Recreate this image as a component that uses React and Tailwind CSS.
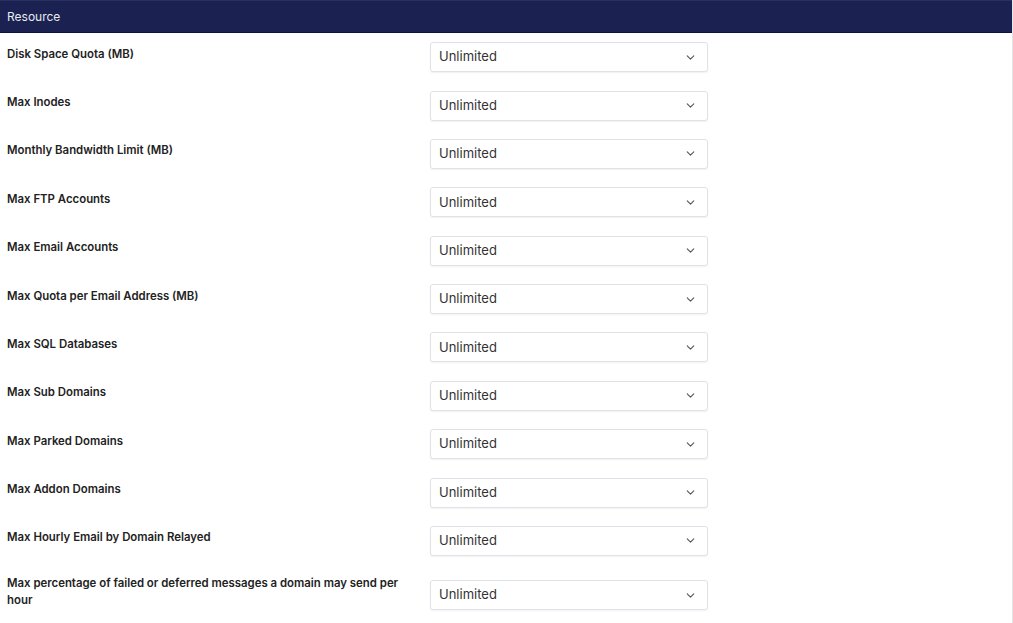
import React from 'react';
import { ChevronDown } from 'lucide-react';

const rows = [
  'Disk Space Quota (MB)',
  'Max Inodes',
  'Monthly Bandwidth Limit (MB)',
  'Max FTP Accounts',
  'Max Email Accounts',
  'Max Quota per Email Address (MB)',
  'Max SQL Databases',
  'Max Sub Domains',
  'Max Parked Domains',
  'Max Addon Domains',
  'Max Hourly Email by Domain Relayed',
  'Max percentage of failed or deferred messages a domain may send per hour',
];

function SelectBox() {
  return (
    <div className="w-[278px] h-[30px] shrink-0 flex items-center justify-between pl-[8px] pr-[10px] bg-white border border-[#dfe2e8] rounded-[3px] shadow-[0_1px_2px_rgba(0,0,0,0.06)]">
      <span className="text-[13px] text-[#333]">Unlimited</span>
      <ChevronDown className="w-[13px] h-[13px] text-[#555]" strokeWidth={2} />
    </div>
  );
}

export default function App() {
  return (
    <div className="w-[1013px] h-[623px] bg-white overflow-hidden border-r border-[#e5e5e5]" style={{ fontFamily: 'Inter, "Noto Sans", sans-serif' }}>
      <div className="h-[33px] bg-[#1b2150] border-t border-[#2a3060] border-b border-b-[#0c1244] flex items-center px-[7px]">
        <span className="text-[12px] text-[#e8eaf2]">Resource</span>
      </div>
      <div className="px-[7px]">
        {rows.map((label, i) => (
          <div key={label} className={`flex items-center py-[9.2px] ${i === rows.length - 1 ? 'pt-[10px]' : ''}`}>
            <div className="w-[423px] shrink-0 pr-[20px] pb-[6px] text-[11.4px] leading-[17px] font-semibold text-[#222]">
              {label}
            </div>
            <SelectBox />
          </div>
        ))}
      </div>
    </div>
  );
}
